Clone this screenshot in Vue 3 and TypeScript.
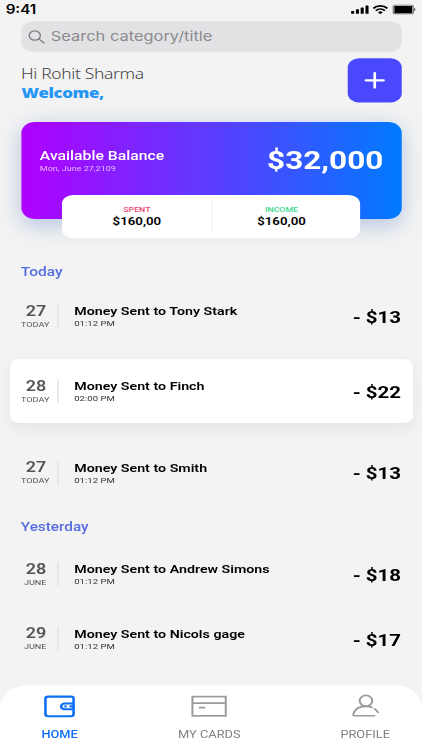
<script setup lang="ts">
interface Transaction {
  day: string
  label: string
  title: string
  time: string
  amount: string
  active?: boolean
}
interface Group {
  name: string
  items: Transaction[]
}

const groups: Group[] = [
  {
    name: 'Today',
    items: [
      { day: '27', label: 'TODAY', title: 'Money Sent to Tony Stark', time: '01:12 PM', amount: '- $13' },
      { day: '28', label: 'TODAY', title: 'Money Sent to Finch', time: '02:00 PM', amount: '- $22', active: true },
      { day: '27', label: 'TODAY', title: 'Money Sent to Smith', time: '01:12 PM', amount: '- $13' },
    ],
  },
  {
    name: 'Yesterday',
    items: [
      { day: '28', label: 'JUNE', title: 'Money Sent to Andrew Simons', time: '01:12 PM', amount: '- $18' },
      { day: '29', label: 'JUNE', title: 'Money Sent to Nicols gage', time: '01:12 PM', amount: '- $17' },
    ],
  },
]
</script>

<template>
  <div class="viewport">
    <div class="screen">
      <header class="status">
        <span class="clock">9:41</span>
        <div class="status-icons">
          <svg class="signal" viewBox="0 0 17 11" fill="#000">
            <rect x="0" y="7" width="3" height="3.4" rx="0.8" />
            <rect x="4.7" y="5" width="3" height="5.4" rx="0.8" />
            <rect x="9.3" y="2.8" width="3" height="7.6" rx="0.8" />
            <rect x="14" y="0.4" width="3" height="10" rx="0.8" />
          </svg>
          <svg class="wifi" viewBox="0 0 15 11" fill="none" stroke="#000" stroke-width="2">
            <path d="M.8 4.2C4.6.4 10.4.4 14.2 4.2" />
            <path d="M3.2 6.8c2.5-2.4 6.1-2.4 8.6 0" />
            <path d="M5.2 8.6c1.4-1.2 3.2-1.2 4.6 0L7.5 11z" fill="#000" stroke="none" />
          </svg>
          <svg class="battery" viewBox="0 0 22 11">
            <rect x="0.5" y="0.5" width="18.6" height="10" rx="2" fill="none" stroke="#666" />
            <rect x="1.5" y="1.4" width="16.6" height="8.2" rx="0.8" fill="#000" />
            <path d="M20 3.7c1.4.4 1.4 3.2 0 3.6z" fill="#333" />
          </svg>
        </div>
      </header>

      <div class="search">
        <svg viewBox="0 0 16 16" fill="none" stroke="#7f7f84" stroke-width="1.35" stroke-linecap="round">
          <circle cx="6.3" cy="6.3" r="5.3" />
          <path d="M10.2 10.2L15 15" />
        </svg>
        <span>Search category/title</span>
      </div>

      <div class="greeting">
        <div class="greeting-text">
          <p class="hello">Hi Rohit Sharma</p>
          <p class="welcome">Welcome,</p>
        </div>
        <button class="add" aria-label="Add">
          <svg viewBox="0 0 18 18" stroke="#fff" stroke-width="2.4" stroke-linecap="round">
            <path d="M9 1.2v15.6M1.1 9h15.8" />
          </svg>
        </button>
      </div>

      <section class="balance">
        <div class="balance-main">
          <div>
            <p class="balance-title">Available Balance</p>
            <p class="balance-date">Mon, June 27,2109</p>
          </div>
          <strong class="balance-amount">$32,000</strong>
        </div>
        <div class="summary">
          <div class="summary-item">
            <span class="summary-label spent">SPENT</span>
            <span class="summary-value">$160,00</span>
          </div>
          <div class="summary-item">
            <span class="summary-label income">INCOME</span>
            <span class="summary-value">$160,00</span>
          </div>
        </div>
      </section>

      <main class="history">
        <section v-for="group in groups" :key="group.name" class="group">
          <h2>{{ group.name }}</h2>
          <article v-for="item in group.items" :key="item.title" class="row" :class="{ active: item.active }">
            <div class="date">
              <span class="day">{{ item.day }}</span>
              <span class="label">{{ item.label }}</span>
            </div>
            <div class="info">
              <h3>{{ item.title }}</h3>
              <span class="time">{{ item.time }}</span>
            </div>
            <span class="amount">{{ item.amount }}</span>
          </article>
        </section>
      </main>

      <nav class="tabs">
        <a class="tab home">
          <svg viewBox="0 0 28 24" fill="none" stroke="#0f6ff5" stroke-width="2.3">
            <rect x="1.4" y="2.2" width="25" height="21.2" rx="2.4" />
            <path d="M26.4 9.7H18.4a3.1 3.1 0 0 0 0 6.2h8M26.4 12.8h-3.6M20.2 12.8h-2" />
          </svg>
          <span>HOME</span>
        </a>
        <a class="tab cards">
          <svg viewBox="0 0 32 24" fill="none" stroke="#9a9a9a" stroke-width="1.8">
            <rect x="1" y="2.2" width="29.6" height="20.8" />
            <path d="M1 9.3h29.6M6.8 14.2h5.6" />
          </svg>
          <span>MY CARDS</span>
        </a>
        <a class="tab profile">
          <svg viewBox="0 0 24 24" fill="none" stroke="#9a9a9a" stroke-width="1.8" stroke-linecap="round">
            <ellipse cx="12.2" cy="6.7" rx="5.6" ry="5.8" />
            <path d="M19.8 22.9H2c-1.1 0-1.3-.8-1-2 1.3-5.3 5-8.2 10.8-8.2h.6c2.1 0 3.7.4 5.1 1.1" />
            <path d="M19.9 15.5l1.2 1.1M21.8 17.7l1 1.6" />
          </svg>
          <span>PROFILE</span>
        </a>
      </nav>
    </div>
  </div>
</template>

<style>
body {
  margin: 0;
  background: #f3f3f3;
}
</style>

<style scoped>
.viewport {
  width: 422px;
  height: 750px;
  overflow: hidden;
}
/* The layout uses a 375x812 grid, fitted to the viewport. */
.screen {
  display: flex;
  flex-direction: column;
  width: 375px;
  height: 812px;
  transform: scale(1.12533, 0.92365);
  transform-origin: 0 0;
  background: #f3f3f3;
  color: #000;
  font-family: Roboto, sans-serif;
  box-sizing: border-box;
}
p, h2, h3 {
  margin: 0;
}
svg {
  display: block;
  overflow: visible;
  flex: none;
}
.status {
  height: 23px;
  display: flex;
  justify-content: space-between;
  padding: 0 5px;
}
.clock {
  font: 600 13.5px/21px Inter, sans-serif;
}
.status-icons {
  display: flex;
  align-items: flex-start;
  gap: 4px;
  padding-top: 4.7px;
}
.signal { width: 15.5px; height: 11px; }
.wifi { width: 14px; height: 10.5px; }
.battery { width: 21px; height: 10.6px; }
.search {
  display: flex;
  align-items: center;
  gap: 5.3px;
  height: 33px;
  margin: 0 18.4px 0 18.7px;
  padding-left: 6.2px;
  box-sizing: border-box;
  border-radius: 10px;
  background: #e2e2e4;
  color: #8a8a8e;
  font: 400 14.6px/32px Inter, sans-serif;
}
.search svg { width: 15px; height: 16px; }
.search span { padding-bottom: 1px; }
.greeting {
  display: flex;
  justify-content: space-between;
  margin: 7px 18.3px 0;
  height: 48px;
}
.greeting-text { padding: 7px 0 0 0.3px; }
.hello {
  font: 300 15.5px/20px "Noto Sans", sans-serif;
  letter-spacing: -0.3px;
  color: #444;
}
.welcome {
  font: 900 15px/20px "Noto Sans", sans-serif;
  letter-spacing: -0.35px;
  padding-left: 0.6px;
  color: #2795f5;
}
.add {
  width: 47.7px;
  height: 47.5px;
  border: 0;
  border-radius: 10px;
  padding: 0;
  background: #4a48ff;
  display: flex;
  align-items: center;
  justify-content: center;
}
.add svg { width: 18px; height: 18px; }
.balance {
  height: 125.5px;
  margin: 21px 18.4px 0 18.6px;
  display: grid;
  grid-template-rows: 79px 46.5px;
  position: relative;
}
.balance-main {
  grid-row: 1;
  grid-column: 1;
  height: 104.5px;
  border-radius: 12px;
  box-sizing: border-box;
  padding: 26px 16px 0 16.8px;
  display: flex;
  justify-content: space-between;
  background: linear-gradient(90deg, #b000ff, #5c3cff 50%, #007aff);
  box-shadow: 0 6px 22px rgba(70, 115, 190, 0.36);
  color: #fff;
}
.balance-title {
  font-size: 14px;
  font-weight: 500;
  line-height: 20px;
}
.balance-date {
  font-size: 8px;
  line-height: 10px;
  color: rgba(255, 255, 255, 0.7);
}
.balance-amount {
  font-size: 28px;
  line-height: 32px;
  font-weight: 700;
}
.summary {
  grid-row: 2;
  grid-column: 1;
  z-index: 1;
  width: 265px;
  margin-left: 36.8px;
  border-radius: 10px;
  background: #fff;
  display: grid;
  grid-template-columns: 1fr 1fr;
}
.summary-item {
  display: flex;
  flex-direction: column;
  align-items: center;
  margin: 4.5px 0;
  padding-top: 6.5px;
}
.summary-item + .summary-item {
  border-left: 1px solid #eee;
  padding-right: 9px;
}
.summary-label {
  font-size: 7.8px;
  line-height: 10px;
  font-weight: 500;
}
.spent { color: #ee4675; }
.income { color: #40d98c; }
.summary-value {
  font-size: 11.8px;
  line-height: 14px;
  font-weight: 600;
  padding-top: 0.5px;
}
.history {
  flex: 1;
  padding: 26.5px 8.4px 0 9px;
}
h2 {
  font-size: 13.8px;
  line-height: 20px;
  font-weight: 500;
  color: #566ce0;
  padding-left: 9.5px;
  margin-bottom: 4px;
}
.group + .group { margin-top: 14px; }
.group + .group h2 { font-size: 13.6px; margin-bottom: 6.6px; }
.row {
  display: flex;
  align-items: center;
  height: 69.3px;
  box-sizing: border-box;
  padding: 0 10.2px 0 9.4px;
  border-radius: 8px;
}
.row + .row { margin-top: 1px; }
.row + .row.active { margin-top: 11.6px; }
.row.active + .row { margin-top: 19px; }
.row.active {
  background: #fff;
  box-shadow: 0 6px 16px rgba(0, 0, 0, 0.06);
}
.date {
  width: 33.4px;
  height: 25px;
  border-right: 1px solid #dcdcdc;
  box-sizing: border-box;
  padding-right: 6.6px;
  display: flex;
  flex-direction: column;
  align-items: center;
  justify-content: center;
  color: #555;
}
.day {
  font-size: 16px;
  line-height: 16px;
  font-weight: 600;
  padding-left: 1.6px;
}
.label {
  font-size: 8.1px;
  line-height: 11px;
  padding-top: 1px;
}
.info {
  flex: 1;
  padding: 0.4px 0 0 14.2px;
}
h3 {
  font-size: 12.65px;
  line-height: 16px;
  font-weight: 600;
}
.time {
  display: block;
  font-size: 8.5px;
  line-height: 11px;
  color: #333;
}
.amount {
  font-size: 18.2px;
  font-weight: 700;
  padding-top: 1.6px;
}
.tabs {
  height: 70.5px;
  box-sizing: border-box;
  padding: 10px 0 0;
  border-radius: 24px 24px 0 0;
  background: #fff;
  display: flex;
  justify-content: space-between;
  font-size: 11.4px;
  color: #808080;
}
.tab {
  display: flex;
  flex-direction: column;
  align-items: center;
  gap: 11.5px;
  line-height: 16px;
}
.home {
  width: 106px;
  color: #0f6ff5;
  font-weight: 500;
}
.cards { width: 100px; margin-right: 8px; }
.profile { width: 101px; }
.tab svg { height: 24px; }
.home svg { width: 28px; }
.cards svg { width: 32px; }
.profile svg { width: 24px; }
</style>
